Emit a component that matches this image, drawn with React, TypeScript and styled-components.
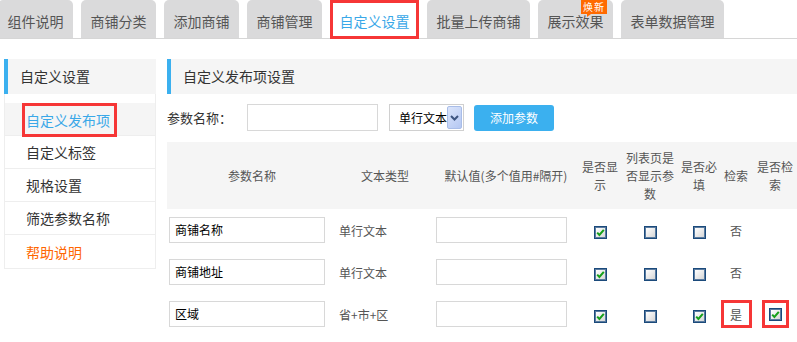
import styled, { createGlobalStyle } from "styled-components";

const GlobalStyle = createGlobalStyle`
  body {
    margin: 0;
    background: #fff;
    font-family: "Noto Sans CJK SC", "Liberation Sans", sans-serif;
    color: #333;
  }
`;

const tabs = ["组件说明", "商铺分类", "添加商铺", "商铺管理", "自定义设置", "批量上传商铺", "展示效果", "表单数据管理"];
const sideItems = ["自定义发布项", "自定义标签", "规格设置", "筛选参数名称", "帮助说明"];

type Row = {
  name: string;
  type: string;
  show: boolean;
  list: boolean;
  required: boolean;
  search: string;
  searchable?: boolean;
  mark?: boolean;
};

const rows: Row[] = [
  { name: "商铺名称", type: "单行文本", show: true, list: false, required: false, search: "否" },
  { name: "商铺地址", type: "单行文本", show: true, list: false, required: false, search: "否" },
  { name: "区域", type: "省+市+区", show: true, list: false, required: true, search: "是", searchable: true, mark: true },
];

function Check({ on }: { on: boolean }) {
  return (
    <Box>
      {on && (
        <svg width="9" height="9" viewBox="0 0 9 9">
          <polyline points="1.2,4.6 3.4,7 7.8,1.8" fill="none" stroke="#17a01a" strokeWidth="2" />
        </svg>
      )}
    </Box>
  );
}

export default function App() {
  return (
    <>
      <GlobalStyle />
      <TabBar>
        {tabs.map((t, i) => (
          <Tab key={t} $active={i === 4}>
            {t}
            {t === "展示效果" && <Badge>焕新</Badge>}
          </Tab>
        ))}
      </TabBar>
      <Content>
        <Sidebar>
          <PanelHead>自定义设置</PanelHead>
          <SideList>
            {sideItems.map((s, i) => (
              <SideItem key={s} $active={i === 0} $help={s === "帮助说明"}>
                {i === 0 ? <Marked>{s}</Marked> : s}
              </SideItem>
            ))}
          </SideList>
        </Sidebar>
        <Main>
          <PanelHead>自定义发布项设置</PanelHead>
          <FormRow>
            <Label>参数名称：</Label>
            <TextInput />
            <FakeSelect>
              单行文本
              <SelectArrow>
                <svg width="9" height="6" viewBox="0 0 9 6">
                  <polyline points="1,1 4.5,4.5 8,1" fill="none" stroke="#3d5580" strokeWidth="2" />
                </svg>
              </SelectArrow>
            </FakeSelect>
            <AddButton>添加参数</AddButton>
          </FormRow>
          <Table>
            <colgroup>
              <col style={{ width: 170 }} />
              <col style={{ width: 96 }} />
              <col style={{ width: 146 }} />
              <col style={{ width: 42 }} />
              <col style={{ width: 58 }} />
              <col style={{ width: 40 }} />
              <col style={{ width: 34 }} />
              <col style={{ width: 44 }} />
            </colgroup>
            <thead>
              <tr>
                <Th>参数名称</Th>
                <Th>文本类型</Th>
                <Th>默认值(多个值用#隔开)</Th>
                <Th>是否显示</Th>
                <Th>列表页是否显示参数</Th>
                <Th>是否必填</Th>
                <Th>检索</Th>
                <Th>是否检索</Th>
              </tr>
            </thead>
            <tbody>
              {rows.map((r) => (
                <tr key={r.name}>
                  <Td $pad={2}>
                    <CellInput $w={156}>{r.name}</CellInput>
                  </Td>
                  <Td $pad={2}>
                    <TypeText>{r.type}</TypeText>
                  </Td>
                  <Td $pad={3}>
                    <CellInput $w={131} />
                  </Td>
                  <Td $center>
                    <Check on={r.show} />
                  </Td>
                  <Td $center>
                    <Check on={r.list} />
                  </Td>
                  <Td $center>
                    <Check on={r.required} />
                  </Td>
                  <Td $center>
                    {r.mark ? <RedBox $w={31}>{r.search}</RedBox> : <TypeText>{r.search}</TypeText>}
                  </Td>
                  <Td $center>
                    {r.mark ? (
                      <RedBox $w={27}>
                        <Check on={!!r.searchable} />
                      </RedBox>
                    ) : null}
                  </Td>
                </tr>
              ))}
            </tbody>
          </Table>
        </Main>
      </Content>
    </>
  );
}

const TabBar = styled.div`
  display: flex;
  gap: 8px;
  height: 38px;
  margin-left: -2px;
  border-bottom: 1px solid #d6d6d6;
`;

const Tab = styled.div<{ $active?: boolean }>`
  position: relative;
  height: 38px;
  padding: 0 9.5px;
  line-height: 42px;
  font-size: 14px;
  white-space: nowrap;
  border-radius: 5px 5px 0 0;
  background: ${(p) => (p.$active ? "#fff" : "#dadadb")};
  color: ${(p) => (p.$active ? "#3aa8e8" : "#555")};
  box-shadow: ${(p) => (p.$active ? "inset 0 0 0 3px #f63636" : "none")};
  ${(p) => p.$active && "border-radius: 0; height: 39px;"}
`;

const Badge = styled.span`
  position: absolute;
  left: 43px;
  top: 0;
  width: 26px;
  height: 14px;
  padding-top: 1px;
  box-sizing: border-box;
  background: #ff6a00;
  color: #fff;
  font-size: 10px;
  line-height: 12px;
  text-align: center;
  letter-spacing: 1px;

  &::after {
    content: "";
    position: absolute;
    left: 6px;
    top: 14px;
    border-top: 3px solid #ff6a00;
    border-right: 4px solid transparent;
  }
`;

const Content = styled.div`
  display: flex;
  align-items: flex-start;
  gap: 11px;
  padding: 20px 0 0 4px;
`;

const Sidebar = styled.div`
  width: 152px;
  flex: none;
`;

const PanelHead = styled.div`
  height: 35px;
  line-height: 35px;
  padding-left: 12px;
  background: #f5f5f5;
  border-left: 4px solid #3bb0ef;
  font-size: 14px;
  color: #333;
`;

const SideList = styled.ul`
  list-style: none;
  margin: 0;
  padding: 9px 0 0;
  border: 1px solid #eeeeee;
  border-top: none;
`;

const SideItem = styled.li<{ $active?: boolean; $help?: boolean }>`
  display: flex;
  align-items: center;
  height: 32px;
  padding-left: ${(p) => (p.$active ? "17px" : "21px")};
  font-size: 14px;
  background: ${(p) => (p.$active ? "#f5f5f5" : "#fff")};
  color: ${(p) => (p.$active ? "#3aa8e8" : p.$help ? "#ff6600" : "#333")};
  border-bottom: 1px solid #eeeeee;

  &:last-child {
    border-bottom: none;
    height: 33px;
  }
`;

const Marked = styled.span`
  display: inline-block;
  height: 34px;
  line-height: 28px;
  margin-top: 2px;
  padding: 0 4px 0 1px;
  border: 3px solid #f63636;
  box-sizing: border-box;
`;

const Main = styled.div`
  flex: 1;
`;

const FormRow = styled.div`
  display: flex;
  align-items: center;
  margin-top: 10px;
  height: 27px;
`;

const Label = styled.span`
  width: 80px;
  font-size: 13px;
  color: #333;
`;

const TextInput = styled.div`
  width: 131px;
  height: 27px;
  box-sizing: border-box;
  border: 1px solid #d8d8d8;
`;

const FakeSelect = styled.div`
  display: flex;
  align-items: center;
  justify-content: space-between;
  margin-left: 11px;
  width: 75px;
  height: 27px;
  box-sizing: border-box;
  padding: 1px 1px 1px 9px;
  border: 1px solid #d0d0d0;
  font-size: 12px;
  color: #000;
`;

const SelectArrow = styled.span`
  display: flex;
  align-items: center;
  justify-content: center;
  width: 15px;
  height: 23px;
  border: 1px solid #a9bde8;
  border-radius: 2px;
  box-sizing: border-box;
  background: linear-gradient(135deg, #dbe5fb, #b4c7f2);
`;

const AddButton = styled.div`
  margin-left: 10px;
  width: 80px;
  height: 26px;
  line-height: 26px;
  text-align: center;
  border-radius: 3px;
  background: #3bb0ef;
  color: #fff;
  font-size: 12px;
`;

const Table = styled.table`
  margin-top: 11px;
  width: 630px;
  border-collapse: collapse;
  table-layout: fixed;
`;

const Th = styled.th`
  height: 67px;
  padding: 0 2px;
  background: #f5f5f5;
  font-size: 12px;
  font-weight: normal;
  line-height: 18px;
  color: #555;
  text-align: center;
`;

const Td = styled.td<{ $pad?: number; $center?: boolean }>`
  height: 42px;
  padding: 0 0 0 ${(p) => p.$pad ?? 0}px;
  text-align: ${(p) => (p.$center ? "center" : "left")};
  vertical-align: middle;
  font-size: 12px;
`;

const CellInput = styled.div<{ $w: number }>`
  width: ${(p) => p.$w}px;
  height: 26px;
  line-height: 24px;
  box-sizing: border-box;
  padding-left: 5px;
  border: 1px solid #d8d8d8;
  color: #000;
  font-size: 12px;
`;

const TypeText = styled.span`
  color: #555;
  font-size: 12px;
`;

const Box = styled.span`
  display: inline-flex;
  align-items: center;
  justify-content: center;
  vertical-align: middle;
  width: 13px;
  height: 13px;
  box-sizing: border-box;
  border: 1px solid #1b4a7b;
  box-shadow: inset 0 0 0 1px #5a7ba0;
  background: linear-gradient(135deg, #ffffff 10%, #d4d4d4 95%);
`;

const RedBox = styled.span<{ $w: number }>`
  display: inline-flex;
  align-items: center;
  justify-content: center;
  vertical-align: middle;
  width: ${(p) => p.$w}px;
  height: 28px;
  box-sizing: border-box;
  border: 3px solid #f63636;
  color: #555;
`;
